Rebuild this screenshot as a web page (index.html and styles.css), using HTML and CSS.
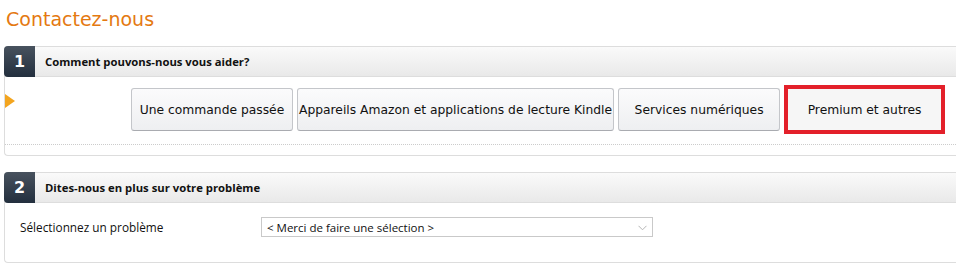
FILE: index.html
```html
<!DOCTYPE html>
<html lang="fr">
<head>
<meta charset="utf-8">
<title>Contactez-nous</title>
<link rel="stylesheet" href="styles.css">
</head>
<body>
<h1 class="title">Contactez-nous</h1>

<section class="box box-1">
  <div class="box-head">
    <span class="badge">1</span>
    <span class="head-text">Comment pouvons-nous vous aider?</span>
  </div>
  <div class="box-body">
    <div class="choice-row">
      <span class="pointer"></span>
      <div class="choices">
        <button class="choice">Une commande passée</button>
        <button class="choice">Appareils Amazon et applications de lecture Kindle</button>
        <button class="choice">Services numériques</button>
        <button class="choice choice-selected">Premium et autres</button>
      </div>
    </div>
    <div class="dots"></div>
  </div>
</section>

<section class="box box-2">
  <div class="box-head">
    <span class="badge">2</span>
    <span class="head-text">Dites-nous en plus sur votre problème</span>
  </div>
  <div class="box-body box-body-2">
    <label class="field-label">Sélectionnez un problème</label>
    <div class="select">
      <span class="select-text">&lt; Merci de faire une sélection &gt;</span>
      <svg class="chev" width="9" height="6" viewBox="0 0 9 6"><path d="M0.5 0.8 L4.5 4.8 L8.5 0.8" fill="none" stroke="#b5b5b5" stroke-width="1"/></svg>
    </div>
  </div>
</section>
</body>
</html>
```

FILE: styles.css
```css
* { box-sizing: border-box; }
html, body { margin: 0; padding: 0; background: #fff; }
body {
  font-family: "DejaVu Sans", Verdana, sans-serif;
  color: #111;
  width: 956px;
  overflow: hidden;
}
.title {
  margin: 0;
  padding: 7px 0 0 6px;
  height: 46px;
  font-family: "DejaVu Sans", Verdana, sans-serif;
  font-weight: normal;
  font-size: 19px;
  line-height: 24px;
  color: #e47911;
}
.box {
  margin-left: 4px;
  width: 970px;
  border: 1px solid #dddddd;
  border-right: none;
  border-radius: 4px 0 0 4px;
}
.box-2 { margin-top: 16px; }
.box-head {
  display: flex;
  align-items: center;
  height: 30px;
  background: linear-gradient(#fafafa, #e9e9e9);
  border-bottom: 1px solid #dddddd;
}
.badge {
  display: flex;
  align-items: center;
  justify-content: center;
  width: 31px;
  height: 31px;
  margin: -1px 0 -1px -1px;
  border-radius: 4px 0 0 4px;
  background: linear-gradient(#48525e, #232f3e);
  color: #fff;
  font-family: "DejaVu Sans", Verdana, sans-serif;
  font-weight: bold;
  font-size: 16px;
}
.head-text {
  margin-left: 10px;
  font-family: "Open Sans", "Noto Sans", sans-serif;
  font-weight: bold;
  font-size: 11.3px;
  color: #111;
}
.box-body { padding: 8px 0 10px 0; }
.choice-row {
  display: flex;
  align-items: flex-start;
}
.pointer {
  width: 0;
  height: 0;
  margin-top: 9px;
  border-top: 7.5px solid transparent;
  border-bottom: 7.5px solid transparent;
  border-left: 10px solid #f3a51f;
}
.choices {
  display: flex;
  align-items: center;
  gap: 4px;
  margin-left: 116px;
}
.choice {
  min-width: 162px;
  height: 43px;
  padding: 0 1px;
  border: 1px solid #c4c6ca;
  border-bottom-color: #a9abb0;
  border-radius: 3px;
  background: linear-gradient(#fbfbfc, #eeeff1);
  font-family: "DejaVu Sans", Verdana, sans-serif;
  font-size: 12.3px;
  color: #111;
  text-align: center;
  white-space: nowrap;
}
.choice-selected {
  min-width: 161px;
  height: 49px;
  border: 4px solid #e3202a;
  border-radius: 0;
  background: #f6f6f6;
}
.dots {
  margin-top: 10px;
  border-top: 1px dotted #cccccc;
}
.box-body-2 {
  display: flex;
  align-items: center;
  padding: 14px 0 25px 15px;
}
.field-label {
  width: 241px;
  font-family: "Open Sans", "Noto Sans", sans-serif;
  font-size: 11.8px;
  color: #111;
}
.select {
  position: relative;
  display: flex;
  align-items: center;
  width: 392px;
  height: 20px;
  padding-left: 5px;
  border: 1px solid #c9c9c9;
  background: #fff;
}
.select-text {
  font-family: "Open Sans", "Noto Sans", sans-serif;
  font-size: 11.5px;
  color: #111;
}
.chev {
  position: absolute;
  right: 5px;
  top: 7px;
}
```
